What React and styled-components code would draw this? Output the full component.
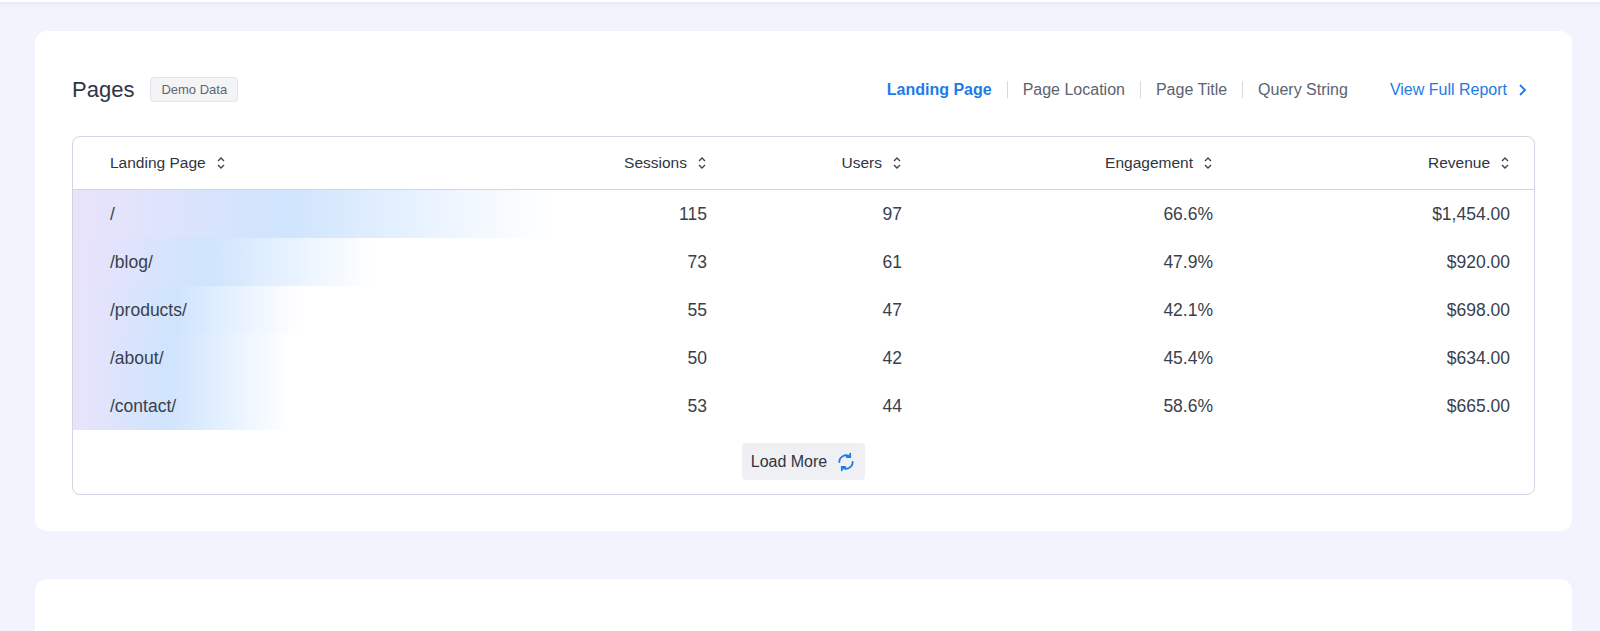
import React from "react";
import styled, { createGlobalStyle } from "styled-components";

const Global = createGlobalStyle`
  body { margin:0; background:#f1f4fd; font-family:"Liberation Sans", Arial, sans-serif; color:#393f4c; }
`;
const TopBar = styled.div`height:2px;background:#fff;box-shadow:0 1px 4px rgba(40,60,100,.12);`;
const Page = styled.div`padding:29px 28px 0 35px;display:flex;flex-direction:column;gap:48px;`;
const Card = styled.div`background:#fff;border-radius:12px;padding:41px 37px 36px 37px;`;
const Card2 = styled.div`background:#fff;border-radius:12px 12px 0 0;height:60px;`;
const Head = styled.div`display:flex;align-items:center;height:35px;margin-bottom:29px;`;
const Title = styled.h2`margin:0;font-size:22px;font-weight:400;color:#2f3542;`;
const Badge = styled.span`margin-left:16px;font-size:13px;color:#5e6573;background:#f3f4f6;border:1px solid #e2e4e8;border-radius:4px;padding:4px 10px;`;
const Tabs = styled.div`margin-left:auto;display:flex;align-items:center;font-size:16px;`;
const Tab = styled.span`color:${p=>p.$active?"#1f7ae8":"#5c6370"};font-weight:${p=>p.$active?700:400};`;
const Sep = styled.span`width:1px;height:17px;background:#d6d9df;margin:0 15px;`;
const Link = styled.span`margin-left:42px;color:#1f7ae8;display:flex;align-items:center;gap:10px;margin-right:8px;`;
const Table = styled.div`border:1px solid #cfd6e2;border-radius:8px;overflow:hidden;`;
const cols = "410px 187px 195px 311px 1fr";
const HeadRow = styled.div`display:grid;grid-template-columns:${cols};padding:0 24px 0 37px;height:52px;align-items:center;border-bottom:1px solid #cfd6e2;font-size:15.5px;color:#2f3542;`;
const Row = styled.div`position:relative;display:grid;grid-template-columns:${cols};padding:0 24px 0 37px;height:48px;align-items:center;font-size:17.5px;color:#393f4c;`;
const Bar = styled.div`position:absolute;left:0;top:0;bottom:0;background:linear-gradient(90deg,#e9e3fb 0%,#cfe4fd 45%,rgba(220,236,255,.6) 75%,rgba(255,255,255,0) 100%);`;
const Cell = styled.div`position:relative;display:flex;align-items:center;gap:10px;justify-content:${p=>p.$right?"flex-end":"flex-start"};`;
const Footer = styled.div`display:flex;justify-content:center;padding:13px 0 14px;`;
const Btn = styled.button`display:flex;align-items:center;gap:9px;font:16px "Liberation Sans",Arial,sans-serif;color:#2f3542;background:#eef0f3;border:none;border-radius:4px;height:37px;padding:0 9px;`;

const Sort = () => (
  <svg width="10" height="14" viewBox="0 0 10 14" fill="none" stroke="#444" strokeWidth="1.4"><path d="M2 5l3-3 3 3M2 9l3 3 3-3"/></svg>
);
const data = [
  ["/", 115, 97, "66.6%", "$1,454.00", 477],
  ["/blog/", 73, 61, "47.9%", "$920.00", 302],
  ["/products/", 55, 47, "42.1%", "$698.00", 228],
  ["/about/", 50, 42, "45.4%", "$634.00", 218],
  ["/contact/", 53, 44, "58.6%", "$665.00", 218],
];
export default function App() {
  return (<>
    <Global/>
    <TopBar/>
    <Page>
      <Card>
        <Head>
          <Title>Pages</Title><Badge>Demo Data</Badge>
          <Tabs>
            <Tab $active>Landing Page</Tab><Sep/><Tab>Page Location</Tab><Sep/><Tab>Page Title</Tab><Sep/><Tab>Query String</Tab>
            <Link>View Full Report <svg width="10" height="14" viewBox="0 0 10 14" fill="none" stroke="#1f7ae8" strokeWidth="1.8"><path d="M3 2l5 5-5 5"/></svg></Link>
          </Tabs>
        </Head>
        <Table>
          <HeadRow>
            <Cell>Landing Page <Sort/></Cell>
            <Cell $right>Sessions <Sort/></Cell>
            <Cell $right>Users <Sort/></Cell>
            <Cell $right>Engagement <Sort/></Cell>
            <Cell $right>Revenue <Sort/></Cell>
          </HeadRow>
          {data.map(d => (
            <Row key={d[0]}>
              <Bar style={{width:d[5]}}/>
              <Cell>{d[0]}</Cell><Cell $right>{d[1]}</Cell><Cell $right>{d[2]}</Cell><Cell $right>{d[3]}</Cell><Cell $right>{d[4]}</Cell>
            </Row>
          ))}
          <Footer><Btn>Load More <svg width="20" height="20" viewBox="0 0 24 24" fill="none" stroke="#1f7ae8" strokeWidth="2.2" strokeLinecap="round"><path d="M4 12a8 8 0 0 1 13-6.2M20 12a8 8 0 0 1-13 6.2"/><path d="M17 2v4h-4M7 22v-4h4"/></svg></Btn></Footer>
        </Table>
      </Card>
      <Card2/>
    </Page>
  </>);
}
